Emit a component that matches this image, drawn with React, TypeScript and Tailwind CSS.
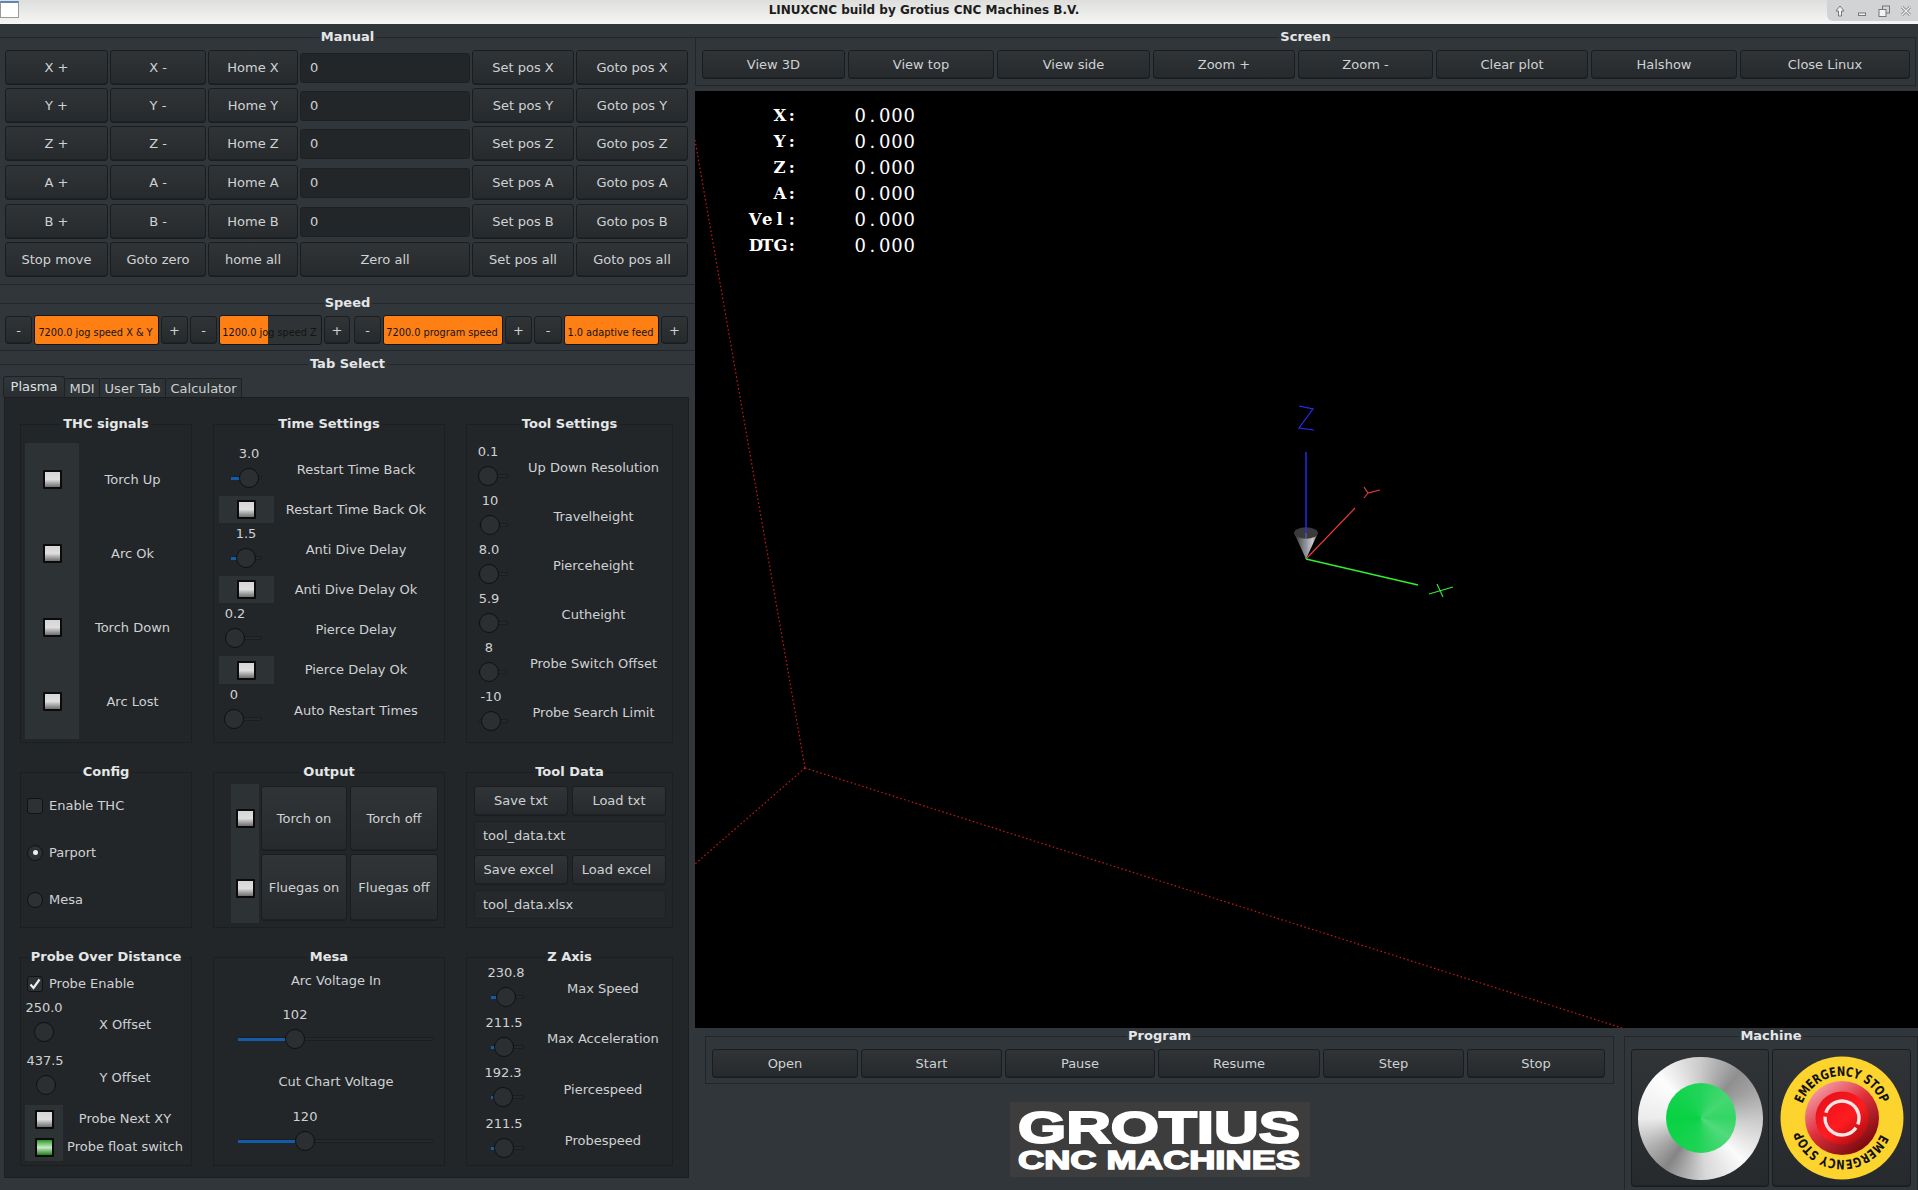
import React from "react";

const btnBase =
  "flex items-center justify-center rounded-[3px] border border-[#1a1d1f] bg-linear-to-b from-[#303437] to-[#272a2d] text-[13px] text-[#cfd2d4] whitespace-nowrap shadow-[inset_0_-1px_0_#1f2225]";

function Btn({ children, className = "" }: { children: React.ReactNode; className?: string }) {
  return <button className={`${btnBase} ${className}`}>{children}</button>;
}

function Group({
  title,
  children,
  className = "",
  titleClass = "bg-[#31363b]",
}: {
  title: string;
  children?: React.ReactNode;
  className?: string;
  titleClass?: string;
}) {
  return (
    <div className={`relative ${className}`}>
      <div
        className={`absolute left-1/2 -top-[9px] -translate-x-1/2 whitespace-nowrap px-[2px] text-[13px] font-bold leading-[16px] text-[#e4e6e7] ${titleClass}`}
      >
        {title}
      </div>
      {children}
    </div>
  );
}

function PaneGroup({ title, children }: { title: string; children?: React.ReactNode }) {
  return (
    <Group title={title} titleClass="bg-[#232629]" className="border border-[#1c1f21]">
      {children}
    </Group>
  );
}

function Led({ green = false, className = "" }: { green?: boolean; className?: string }) {
  return (
    <div
      className={
        (green
          ? "size-[19px] shrink-0 rounded-[1px] border-2 border-[#0b0b0b] bg-linear-to-b from-[#1c9a1c] via-[#c5ecc5] to-[#148014] "
          : "size-[19px] shrink-0 rounded-[1px] border-2 border-[#0b0b0b] bg-linear-to-b from-[#d6d6d6] via-[#dedede] to-[#6f6f6f] ") + className
      }
    />
  );
}

function Slider({
  value,
  x,
  labelX,
  fill = true,
  className = "",
}: {
  value: string;
  x: number;
  labelX?: number;
  fill?: boolean;
  className?: string;
}) {
  return (
    <div className={`flex flex-col ${className}`}>
      <div
        className="flex h-[19px] w-0 justify-center whitespace-nowrap text-[13px] leading-[19px]"
        style={{ marginLeft: labelX ?? x }}
      >
        {value}
      </div>
      <div className="relative mt-[5px] flex h-[20px] items-center">
        <div className="h-[4px] w-full rounded-[2px] border border-[#1b1e20] bg-[#26292c]" />
        {fill && <div className="absolute left-0 h-[3px] bg-[#155ca8]" style={{ width: x }} />}
        <div
          className="absolute size-[20px] rounded-full border border-[#0e1012] bg-[#2b2f32]"
          style={{ left: x - 10 }}
        />
      </div>
    </div>
  );
}

const manualGrid = "grid h-[35px] grid-cols-[103px_96px_90px_170px_102px_112px] gap-x-[2px]";
const axes: [string, string][] = [
  ["X", ""],
  ["Y", "mt-[3px]"],
  ["Z", "mt-[3px]"],
  ["A", "mt-[4px]"],
  ["B", "mt-[4px]"],
];

function Manual() {
  return (
    <Group title="Manual" className="h-[248px] border-y border-[#22262a] pl-[5px] pt-[12px]">
      {axes.map(([a, gap]) => (
        <div key={a} className={`${manualGrid} ${gap}`}>
          <Btn>{a} +</Btn>
          <Btn>{a} -</Btn>
          <Btn>Home {a}</Btn>
          <div className="flex items-center">
            <div className="flex h-[30px] w-full items-center rounded-[3px] border border-[#1e2124] bg-[#232629] pl-[9px]">
              0
            </div>
          </div>
          <Btn>Set pos {a}</Btn>
          <Btn>Goto pos {a}</Btn>
        </div>
      ))}
      <div className={`${manualGrid} mt-[3px]`}>
        <Btn>Stop move</Btn>
        <Btn>Goto zero</Btn>
        <Btn>home all</Btn>
        <Btn>Zero all</Btn>
        <Btn>Set pos all</Btn>
        <Btn>Goto pos all</Btn>
      </div>
    </Group>
  );
}

function Bar({ text, pct, className }: { text: string; pct: number; className: string }) {
  return (
    <div
      className={`relative flex h-[30px] items-center justify-center overflow-hidden rounded-[3px] border border-[#15171a] bg-[#2f3336] pr-[2px] pt-[6px] ${className}`}
    >
      <div className="absolute inset-y-0 left-0 bg-[#fe7f14]" style={{ width: `${pct}%` }} />
      <span className="relative whitespace-nowrap text-[9.75px] text-[#141412]">{text}</span>
    </div>
  );
}

function Speed() {
  const small = "h-[28px] pt-[1px]";
  return (
    <Group title="Speed" className="mt-[18px] h-[48px] border-y border-[#22262a] pl-[5px] pt-[11px]">
      <div className="flex h-[30px] items-center gap-[2px]">
        <Btn className={`${small} w-[27px]`}>-</Btn>
        <Bar className="w-[125px]" pct={100} text="7200.0 jog speed X & Y" />
        <Btn className={`${small} w-[27px]`}>+</Btn>
        <Btn className={`${small} w-[27px]`}>-</Btn>
        <Bar className="w-[103px]" pct={48} text="1200.0 jog speed Z" />
        <Btn className={`${small} w-[26px]`}>+</Btn>
        <Btn className={`${small} ml-[2px] w-[27px]`}>-</Btn>
        <Bar className="w-[120px]" pct={100} text="7200.0 program speed" />
        <Btn className={`${small} w-[27px]`}>+</Btn>
        <Btn className={`${small} w-[28px]`}>-</Btn>
        <Bar className="w-[95px]" pct={100} text="1.0 adaptive feed" />
        <Btn className={`${small} w-[27px]`}>+</Btn>
      </div>
    </Group>
  );
}

function Thc() {
  return (
    <PaneGroup title="THC signals">
      <div className="pl-[4px] pt-[18px]">
        {["Torch Up", "Arc Ok", "Torch Down", "Arc Lost"].map((t) => (
          <div key={t} className="flex h-[74px]">
            <div className="flex w-[54px] items-center justify-center bg-[#2d3235]">
              <Led className="mb-[2px]" />
            </div>
            <div className="flex w-[107px] items-center justify-center">{t}</div>
          </div>
        ))}
      </div>
    </PaneGroup>
  );
}

function TimeSettings() {
  const sliderRow = (value: string, x: number, label: string, h: string) => (
    <div className={`flex ${h}`}>
      <div className="w-[55px] pt-[1px]">
        <Slider value={value} x={x} className="ml-[12px] w-[31px]" />
      </div>
      <div className="flex w-[164px] items-center justify-center">{label}</div>
    </div>
  );
  const ledRow = (label: string, h: string) => (
    <div className={`flex ${h}`}>
      <div className="flex w-[55px] items-center justify-center bg-[#2d3235]">
        <Led />
      </div>
      <div className="flex w-[164px] items-center justify-center">{label}</div>
    </div>
  );
  return (
    <PaneGroup title="Time Settings">
      <div className="pl-[5px] pt-[18px]">
        {sliderRow("3.0", 18, "Restart Time Back", "h-[53px]")}
        {ledRow("Restart Time Back Ok", "h-[27px]")}
        {sliderRow("1.5", 15, "Anti Dive Delay", "h-[53px]")}
        {ledRow("Anti Dive Delay Ok", "h-[27px]")}
        {sliderRow("0.2", 4, "Pierce Delay", "h-[53px]")}
        {ledRow("Pierce Delay Ok", "h-[28px]")}
        {sliderRow("0", 3, "Auto Restart Times", "h-[54px]")}
      </div>
    </PaneGroup>
  );
}

function ToolSettings() {
  const rows: [string, number, string][] = [
    ["0.1", 10, "Up Down Resolution"],
    ["10", 12, "Travelheight"],
    ["8.0", 11, "Pierceheight"],
    ["5.9", 11, "Cutheight"],
    ["8", 11, "Probe Switch Offset"],
    ["-10", 13, "Probe Search Limit"],
  ];
  return (
    <PaneGroup title="Tool Settings">
      <div className="pl-[5px] pt-[17px]">
        {rows.map(([v, x, l]) => (
          <div key={l} className="flex h-[49px]">
            <div className="w-[40px] shrink-0">
              <Slider value={v} x={x} fill={false} className="ml-[6px] w-[30px]" />
            </div>
            <div className="flex w-[163px] shrink-0 items-center justify-center pt-[2px]">{l}</div>
          </div>
        ))}
      </div>
    </PaneGroup>
  );
}

function CheckBox({ checked = false }: { checked?: boolean }) {
  return (
    <div className="flex size-[16px] items-center justify-center rounded-[3px] border border-[#101214] bg-[#2d3134]">
      {checked && (
        <svg width="14" height="14" viewBox="0 0 14 14">
          <path d="M2.5 7.5 L5.5 11 L11.5 2.5" fill="none" stroke="#eeeeee" strokeWidth="2.2" />
        </svg>
      )}
    </div>
  );
}

function Config() {
  return (
    <PaneGroup title="Config">
      <div className="pl-[6px] pt-[10px]">
        <div className="flex h-[46px] items-center gap-[6px]">
          <CheckBox />
          Enable THC
        </div>
        <div className="flex h-[47px] items-center gap-[6px]">
          <div className="flex size-[16px] items-center justify-center rounded-full border border-[#101214] bg-[#2d3134]">
            <div className="size-[5px] rounded-full bg-[#eeeeee]" />
          </div>
          Parport
        </div>
        <div className="flex h-[47px] items-center gap-[6px]">
          <div className="size-[16px] rounded-full border border-[#101214] bg-[#2d3134]" />
          Mesa
        </div>
      </div>
    </PaneGroup>
  );
}

function Output() {
  return (
    <PaneGroup title="Output">
      <div className="flex gap-[2px] pl-[17px] pt-[11px]">
        <div className="flex h-[139px] w-[28px] flex-col bg-[#2d3235]">
          <div className="flex h-[69px] items-center justify-center">
            <Led />
          </div>
          <div className="flex h-[70px] items-center justify-center">
            <Led />
          </div>
        </div>
        <div className="mt-[2px] grid grid-cols-[86px_88px] grid-rows-[65px_67px] gap-x-[3px] gap-y-[3px]">
          <Btn>Torch on</Btn>
          <Btn>Torch off</Btn>
          <Btn>Fluegas on</Btn>
          <Btn>Fluegas off</Btn>
        </div>
      </div>
    </PaneGroup>
  );
}

function ToolData() {
  const field = "col-span-2 flex h-[29px] items-center rounded-[3px] border border-[#1e2124] bg-[#26292c] pl-[8px]";
  return (
    <PaneGroup title="Tool Data">
      <div className="grid grid-cols-[94px_94px] gap-x-[4px] gap-y-[5px] pl-[7px] pt-[13px]">
        <Btn className="h-[30px]">Save txt</Btn>
        <Btn className="h-[30px]">Load txt</Btn>
        <div className={field}>tool_data.txt</div>
        <Btn className="h-[30px] pr-[5px]">Save excel</Btn>
        <Btn className="h-[30px] pr-[5px]">Load excel</Btn>
        <div className={field}>tool_data.xlsx</div>
      </div>
    </PaneGroup>
  );
}

function Probe() {
  return (
    <PaneGroup title="Probe Over Distance">
      <div className="pl-[4px] pt-[16px]">
        <div className="flex h-[20px] items-center gap-[6px] pl-[2px]">
          <CheckBox checked />
          Probe Enable
        </div>
        <div className="mt-[4px] flex h-[53px]">
          <div className="w-[38px]">
            <Slider value="250.0" x={10} className="ml-[9px] w-[20px]" />
          </div>
          <div className="flex w-[124px] items-center justify-center">X Offset</div>
        </div>
        <div className="flex h-[53px]">
          <div className="w-[38px]">
            <Slider value="437.5" x={10} labelX={9} className="ml-[11px] w-[20px]" />
          </div>
          <div className="flex w-[124px] items-center justify-center">Y Offset</div>
        </div>
        <div className="mt-[1px] flex h-[28px]">
          <div className="flex w-[38px] items-center justify-center bg-[#2d3235]">
            <Led />
          </div>
          <div className="flex w-[124px] items-center justify-center">Probe Next XY</div>
        </div>
        <div className="flex h-[28px]">
          <div className="flex w-[38px] items-center justify-center bg-[#2d3235]">
            <Led green />
          </div>
          <div className="flex w-[124px] items-center justify-center whitespace-nowrap">Probe float switch</div>
        </div>
      </div>
    </PaneGroup>
  );
}

function Mesa() {
  return (
    <PaneGroup title="Mesa">
      <div className="ml-[24px] w-[196px] pt-[13px]">
        <div className="h-[20px] text-center leading-[20px]">Arc Voltage In</div>
        <Slider value="102" x={57} className="mt-[14px]" />
        <div className="mt-[23px] h-[20px] text-center leading-[20px]">Cut Chart Voltage</div>
        <Slider value="120" x={67} className="mt-[15px]" />
      </div>
    </PaneGroup>
  );
}

function ZAxis() {
  const rows: [string, number, string, string][] = [
    ["230.8", 15, "Max Speed", "h-[50px]"],
    ["211.5", 13, "Max Acceleration", "h-[50px]"],
    ["192.3", 12, "Piercespeed", "h-[51px]"],
    ["211.5", 13, "Probespeed", "h-[51px]"],
  ];
  return (
    <PaneGroup title="Z Axis">
      <div className="pl-[5px] pt-[5px]">
        {rows.map(([v, x, l, h]) => (
          <div key={l} className={`flex ${h}`}>
            <div className="w-[62px]">
              <Slider value={v} x={x} className="ml-[19px] w-[33px]" />
            </div>
            <div className="flex w-[139px] items-center justify-center pt-[2px]">{l}</div>
          </div>
        ))}
      </div>
    </PaneGroup>
  );
}

function TabSelect() {
  return (
    <Group title="Tab Select" className="mt-[13px] flex-1 border-t border-[#22262a] pt-[11px]">
      <div className="ml-[3px] flex h-[21px] items-end text-[13px]">
        <div className="flex h-[21px] w-[62px] items-center justify-center rounded-t-[3px] border-x border-t border-[#1e2124] bg-linear-to-b from-[#31363a] to-[#2a2e31] text-[#dfe1e2]">
          Plasma
        </div>
        <div className="flex h-[19px] w-[35px] items-center justify-center rounded-t-[2px] border-r border-t border-[#1e2124] bg-[#2e3336] pt-[2px]">
          MDI
        </div>
        <div className="flex h-[19px] w-[66px] items-center justify-center rounded-t-[2px] border-r border-t border-[#1e2124] bg-[#2e3336] pt-[2px]">
          User Tab
        </div>
        <div className="flex h-[19px] w-[76px] items-center justify-center rounded-t-[2px] border-r border-t border-[#1e2124] bg-[#2e3336] pt-[2px]">
          Calculator
        </div>
      </div>
      <div className="ml-[4px] h-[781px] w-[685px] border border-[#1c1f21] bg-[#232629] pl-[15px] pt-[26px]">
        <div className="grid grid-cols-[172px_232px_207px] grid-rows-[319px_156px_209px] gap-x-[21px] gap-y-[29px]">
          <Thc />
          <TimeSettings />
          <ToolSettings />
          <Config />
          <Output />
          <ToolData />
          <Probe />
          <Mesa />
          <ZAxis />
        </div>
      </div>
    </Group>
  );
}

function GlScene() {
  return (
    <svg className="absolute inset-0" width="1223" height="937" viewBox="695 91 1223 937">
      <defs>
        <linearGradient id="cone" x1="0" y1="0" x2="1" y2="0">
          <stop offset="0" stopColor="#3a3a3a" />
          <stop offset="0.45" stopColor="#8e8e8e" />
          <stop offset="0.8" stopColor="#c8c8c8" />
          <stop offset="1" stopColor="#777777" />
        </linearGradient>
      </defs>
      <g stroke="#d01818" strokeWidth="1.2" strokeDasharray="1.5 2.5" fill="none">
        <path d="M695 140 L805 768" />
        <path d="M805 768 L695 864" />
        <path d="M805 768 L1622 1028" />
      </g>
      <path d="M1295 535 L1306 559 L1317 535 Z" fill="url(#cone)" />
      <ellipse cx="1306" cy="533" rx="12" ry="5.7" fill="#3a3a3a" />
      <path d="M1306 533 L1306 559" stroke="#7c86d8" strokeWidth="1" opacity="0.7" />
      <path d="M1306 452 L1306 533" stroke="#2b2bff" strokeWidth="1.4" />
      <path d="M1299 406 L1313 409 L1299 428 L1314 430" stroke="#2b2bff" strokeWidth="1.2" fill="none" />
      <path d="M1306 559 L1355 508" stroke="#f03a3a" strokeWidth="1.1" />
      <path d="M1364 487 L1368 493 L1380 490 M1368 493 L1364 498" stroke="#f03a3a" strokeWidth="1.1" fill="none" />
      <path d="M1306 559 L1418 585" stroke="#30f030" strokeWidth="1.3" />
      <path d="M1429 594 L1453 587 M1437 584 L1443 597" stroke="#30f030" strokeWidth="1.1" fill="none" />
    </svg>
  );
}

function Mono({ text, className }: { text: string; className: string }) {
  return (
    <div className={`flex ${className}`}>
      {text.split("").map((c, i) => (
        <span key={i} className="w-[12.3px] shrink-0 text-center">
          {c}
        </span>
      ))}
    </div>
  );
}

function Hud() {
  const rows = [
    ["X:", "0.000"],
    ["Y:", "0.000"],
    ["Z:", "0.000"],
    ["A:", "0.000"],
    ["Vel:", "0.000"],
    ["DTG:", "0.000"],
  ];
  return (
    <div className="relative grid w-fit grid-cols-[49px_auto] auto-rows-[26px] gap-x-[56px] pl-[54px] pt-[12px] font-['DejaVu_Serif',serif] leading-[26px] text-white">
      {rows.map(([a, b]) => (
        <React.Fragment key={a}>
          <Mono text={a} className="justify-end text-[16.5px] font-bold" />
          <Mono text={b} className="text-[18px]" />
        </React.Fragment>
      ))}
    </div>
  );
}

function Logo() {
  return (
    <div className="mx-auto mt-[18px] h-[75px] w-[300px] bg-[#3d3d3d]">
      <svg width="300" height="75" viewBox="0 0 300 75">
        <g fill="#ffffff" stroke="#ffffff" fontFamily="'Liberation Sans', sans-serif" fontWeight="700">
          <text x="8" y="41" fontSize="45" strokeWidth="2" textLength="282" lengthAdjust="spacingAndGlyphs">
            GROTIUS
          </text>
          <text x="8" y="66.5" fontSize="25" strokeWidth="1.4" textLength="282" lengthAdjust="spacingAndGlyphs">
            CNC MACHINES
          </text>
        </g>
      </svg>
    </div>
  );
}

function EStop() {
  return (
    <svg width="124" height="124" viewBox="-62 -62 124 124">
      <defs>
        <linearGradient id="ring" x1="0.15" y1="0.05" x2="0.85" y2="0.95">
          <stop offset="0" stopColor="#f5a3ad" />
          <stop offset="0.45" stopColor="#e0303c" />
          <stop offset="1" stopColor="#6e0508" />
        </linearGradient>
        <linearGradient id="dome" x1="0.1" y1="0" x2="0.9" y2="1">
          <stop offset="0" stopColor="#e50f18" />
          <stop offset="0.55" stopColor="#ff1c20" />
          <stop offset="1" stopColor="#a00a10" />
        </linearGradient>
        <path id="arc" d="M0 -42 A42 42 0 1 1 -0.01 -42" />
      </defs>
      <circle r="61.5" fill="#fdd32d" />
      <circle r="37" fill="url(#ring)" />
      <circle r="26.5" fill="url(#dome)" />
      <circle r="17" fill="none" stroke="#efe5e5" strokeWidth="3.4" strokeDasharray="24 4 44 4 30.8 0" transform="rotate(-60)" />
      <g fontFamily="'DejaVu Sans', sans-serif" fontWeight="700" fontSize="13" fill="#111111">
        <text transform="rotate(-70)">
          <textPath href="#arc" textLength="102" lengthAdjust="spacingAndGlyphs">
            EMERGENCY STOP
          </textPath>
        </text>
        <text transform="rotate(113)">
          <textPath href="#arc" textLength="102" lengthAdjust="spacingAndGlyphs">
            EMERGENCY STOP
          </textPath>
        </text>
      </g>
    </svg>
  );
}

function StartButton() {
  return (
    <div className="flex h-[123px] w-[125px] items-center justify-center rounded-full bg-[conic-gradient(#cacaca_0deg,#8f8f8f_40deg,#a0a0a0_60deg,#cfcfcf_95deg,#fbfbfb_135deg,#d8d8d8_175deg,#858585_215deg,#b0b0b0_240deg,#ececec_270deg,#fdfdfd_315deg,#cacaca_360deg)]">
      <div className="ml-[2px] size-[70px] rounded-full bg-[conic-gradient(#22d45a_0deg,#44d871_50deg,#33d666_90deg,#52da7c_125deg,#1bd353_190deg,#08d243_270deg,#14d34e_320deg,#22d45a_360deg)]" />
    </div>
  );
}

function WinIcons() {
  return (
    <div className="flex h-[21px] w-[91px] items-center gap-[10px] rounded-bl-[6px] bg-[#d2d3d5] pl-[7px]">
      <svg width="12" height="12" viewBox="0 0 12 12">
        <path d="M6 1 L10 6 H7.5 V11 H4.5 V6 H2 Z" fill="#f4f4f4" stroke="#777" strokeWidth="1" />
      </svg>
      <svg width="12" height="12" viewBox="0 0 12 12">
        <rect x="2.5" y="8" width="7" height="2.5" fill="#f4f4f4" stroke="#777" strokeWidth="1" />
      </svg>
      <svg width="12" height="12" viewBox="0 0 12 12">
        <rect x="4.5" y="1" width="7" height="7" fill="none" stroke="#777" strokeWidth="1" />
        <rect x="1" y="4.5" width="7" height="7" fill="#f4f4f4" stroke="#777" strokeWidth="1" />
      </svg>
      <svg width="12" height="12" viewBox="0 0 12 12">
        <path d="M2 2 L10 10 M10 2 L2 10" stroke="#777" strokeWidth="2.6" />
        <path d="M2 2 L10 10 M10 2 L2 10" stroke="#f4f4f4" strokeWidth="1.2" />
      </svg>
    </div>
  );
}

export default function App() {
  return (
    <div className="flex h-[1190px] w-[1918px] flex-col overflow-hidden bg-[#31363b] font-['DejaVu_Sans',sans-serif] text-[13px] text-[#cfd2d4]">
      <header className="flex h-[24px] shrink-0 items-start bg-linear-to-b from-[#dedfdc] to-[#f6f6f4]">
        <div className="mt-[1px] h-[17px] w-[19px] border border-[#9a9a9a] border-t-2 border-t-[#5c86b8] bg-white" />
        <div className="ml-[749px] w-[312px] whitespace-nowrap text-center text-[12px] font-bold leading-[20px] text-[#1c1c1c]">
          LINUXCNC build by Grotius CNC Machines B.V.
        </div>
        <div className="ml-auto">
          <WinIcons />
        </div>
      </header>
      <div className="flex min-h-0 flex-1">
        <div className="flex w-[695px] shrink-0 flex-col pt-[13px]">
          <Manual />
          <Speed />
          <TabSelect />
        </div>
        <div className="flex min-w-0 flex-1 flex-col">
          <Group title="Screen" className="mt-[13px] h-[49px] w-[1221px] border border-[#22262a] pl-[6px] pt-[12px]">
            <div className="grid h-[29px] grid-cols-[143px_146px_153px_142px_135px_152px_146px_170px] gap-x-[3px]">
              {["View 3D", "View top", "View side", "Zoom +", "Zoom -", "Clear plot", "Halshow", "Close Linux"].map((t) => (
                <Btn key={t}>{t}</Btn>
              ))}
            </div>
          </Group>
          <div className="relative mt-[5px] h-[937px] shrink-0 bg-black">
            <GlScene />
            <Hud />
          </div>
          <div className="flex min-h-0 flex-1">
            <div className="ml-[10px] mt-[8px] w-[909px]">
              <Group title="Program" className="h-[48px] border border-[#22262a] pl-[6px] pt-[12px]">
                <div className="grid h-[29px] grid-cols-[146px_141px_150px_162px_141px_138px] gap-x-[3px]">
                  {["Open", "Start", "Pause", "Resume", "Step", "Stop"].map((t) => (
                    <Btn key={t}>{t}</Btn>
                  ))}
                </div>
              </Group>
              <Logo />
            </div>
            <Group title="Machine" className="ml-[10px] mt-[8px] h-[170px] w-[294px] border border-[#22262a] pl-[6px] pt-[12px]">
              <div className="flex gap-[3px]">
                <Btn className="h-[138px] w-[138px]">
                  <StartButton />
                </Btn>
                <Btn className="h-[138px] w-[139px]">
                  <EStop />
                </Btn>
              </div>
            </Group>
          </div>
        </div>
      </div>
    </div>
  );
}
